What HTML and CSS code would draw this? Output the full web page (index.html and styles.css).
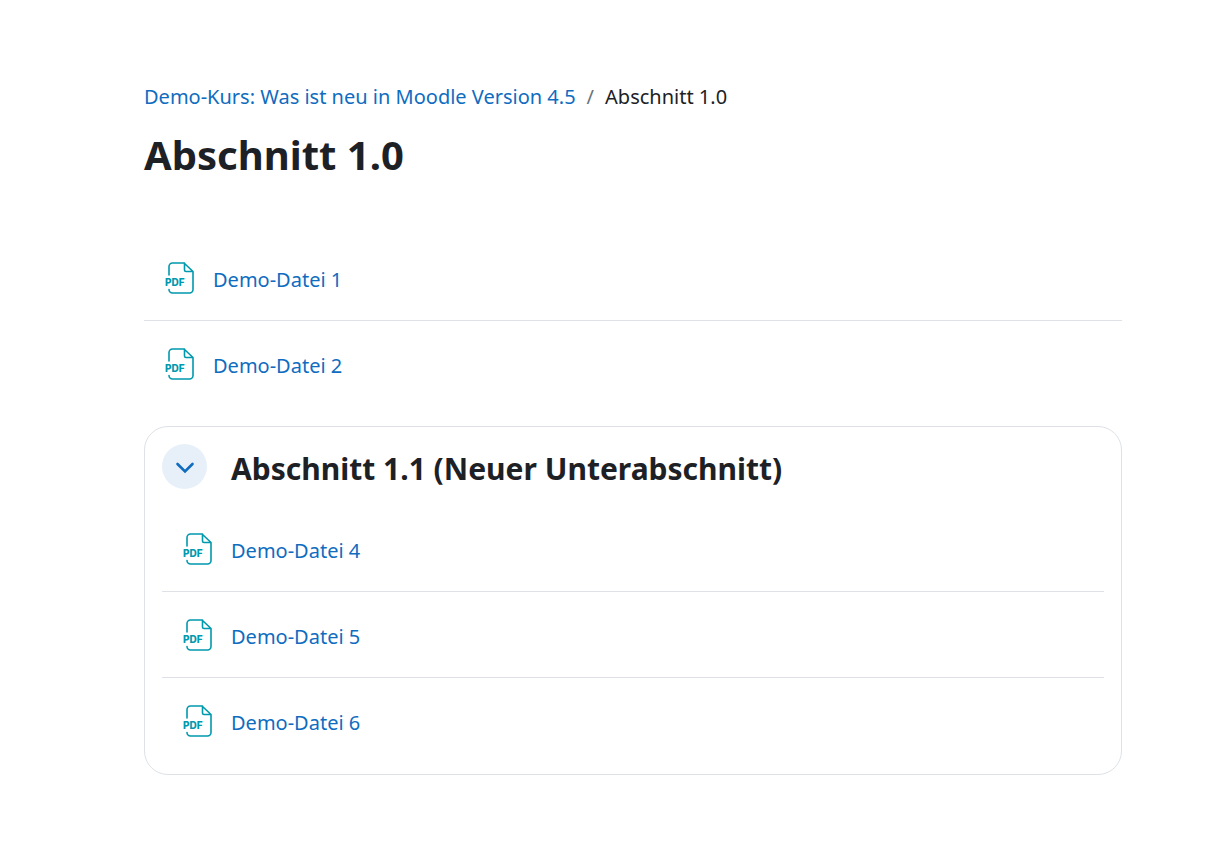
FILE: index.html
```html
<!DOCTYPE html>
<html lang="de">
<head>
  <meta charset="UTF-8">
  <meta name="viewport" content="width=device-width, initial-scale=1.0">
  <title>Abschnitt 1.0</title>
  <link rel="stylesheet" href="styles.css">
</head>
<body>
  <!-- PDF icon shared by all files -->
  <svg class="sprite" aria-hidden="true">
    <symbol id="pdf" viewBox="0 0 30 34">
      <path d="M4 14V5.5a3.500 3.500 0 0 1 3.500-3.500H19L28 10.500V28.500a3.500 3.500 0 0 1-3.500 3.500H7.500a3.500 3.500 0 0 1-3.500-3.500M19.500 2V9a1.500 1.500 0 0 0 1.500 1.500H28" fill="none" stroke="currentColor" stroke-width="1.6" stroke-linejoin="round" stroke-linecap="round"/>
      <text class="pdf-label" x="0" y="25">PDF</text>
    </symbol>
  </svg>

  <main class="page">
    <nav aria-label="Navigationspfad">
      <ol class="breadcrumb">
        <li><a href="#">Demo-Kurs: Was ist neu in Moodle Version 4.5</a></li>
        <li aria-current="page">Abschnitt 1.0</li>
      </ol>
    </nav>
    <h1>Abschnitt 1.0</h1>

    <ul class="files">
      <li><svg class="icon"><use href="#pdf"/></svg><a href="#">Demo-Datei 1</a></li>
      <li><svg class="icon"><use href="#pdf"/></svg><a href="#">Demo-Datei 2</a></li>
    </ul>

    <section class="subsection">
      <div class="subsection-header">
        <button class="toggle" type="button" aria-expanded="true" aria-controls="sub-files" aria-label="Einklappen">
          <svg width="20" height="20" viewBox="0 0 20 20"><path d="M2.500 7l7.500 7.500L17.500 7" fill="none" stroke="currentColor" stroke-width="2.600" stroke-linecap="round" stroke-linejoin="miter"/></svg>
        </button>
        <h2>Abschnitt 1.1 (Neuer Unterabschnitt)</h2>
      </div>
      <ul class="files" id="sub-files">
        <li><svg class="icon"><use href="#pdf"/></svg><a href="#">Demo-Datei 4</a></li>
        <li><svg class="icon"><use href="#pdf"/></svg><a href="#">Demo-Datei 5</a></li>
        <li><svg class="icon"><use href="#pdf"/></svg><a href="#">Demo-Datei 6</a></li>
      </ul>
    </section>
  </main>

  <script>
    const toggle = document.querySelector('.toggle');
    const subFiles = document.getElementById('sub-files');

    // Collapse/expand the subsection
    toggle.addEventListener('click', () => {
      subFiles.hidden = !subFiles.hidden;
      toggle.setAttribute('aria-expanded', String(!subFiles.hidden));
    });
  </script>
</body>
</html>
```
FILE: styles.css
```css
* {
  box-sizing: border-box;
}

body {
  margin: 0;
  background: #fff;
  color: #1d2125;
  font-family: "Segoe UI", "Noto Sans", sans-serif;
  font-size: 20px;
  line-height: 30px;
}

a {
  color: #0f6cbf;
  text-decoration: none;
}

a:hover {
  text-decoration: underline;
}

ul,
ol {
  margin: 0;
  padding: 0;
  list-style: none;
}

.sprite {
  display: none;
}

.page {
  padding: 82px 109px 66px 144px;
}

.breadcrumb {
  display: flex;
  flex-wrap: wrap;
}

.breadcrumb li + li::before {
  content: "/";
  padding: 0 11px;
  color: #6a737b;
}

h1 {
  margin: 18px 0 54px;
  font-size: 40px;
  line-height: 50px;
}

.files li {
  display: flex;
  align-items: center;
  gap: 18px;
  height: 86px;
  padding: 1px 21px 0;
}

.files li + li {
  border-top: 1px solid #dee2e6;
}

.files a {
  padding-top: 4px;
}

.icon {
  flex: none;
  width: 30px;
  height: 34px;
  color: #0099ad;
}

.pdf-label {
  fill: currentColor;
  font-family: Inter, sans-serif;
  font-size: 10px;
  font-weight: 800;
}

.subsection {
  margin-top: 20px;
  padding: 17px 17px 11px;
  border: 1px solid #dee2e6;
  border-radius: 24px;
}

.subsection-header {
  display: flex;
  align-items: center;
  gap: 24px;
  margin-bottom: 16px;
}

.toggle {
  display: flex;
  align-items: center;
  justify-content: center;
  flex: none;
  width: 45px;
  height: 45px;
  padding: 0;
  border: none;
  border-radius: 50%;
  background: #e7f0f9;
  color: #0f6cbf;
  cursor: pointer;
}

h2 {
  margin: 0;
  padding-top: 4px;
  font-size: 30px;
  line-height: 40px;
}
```
